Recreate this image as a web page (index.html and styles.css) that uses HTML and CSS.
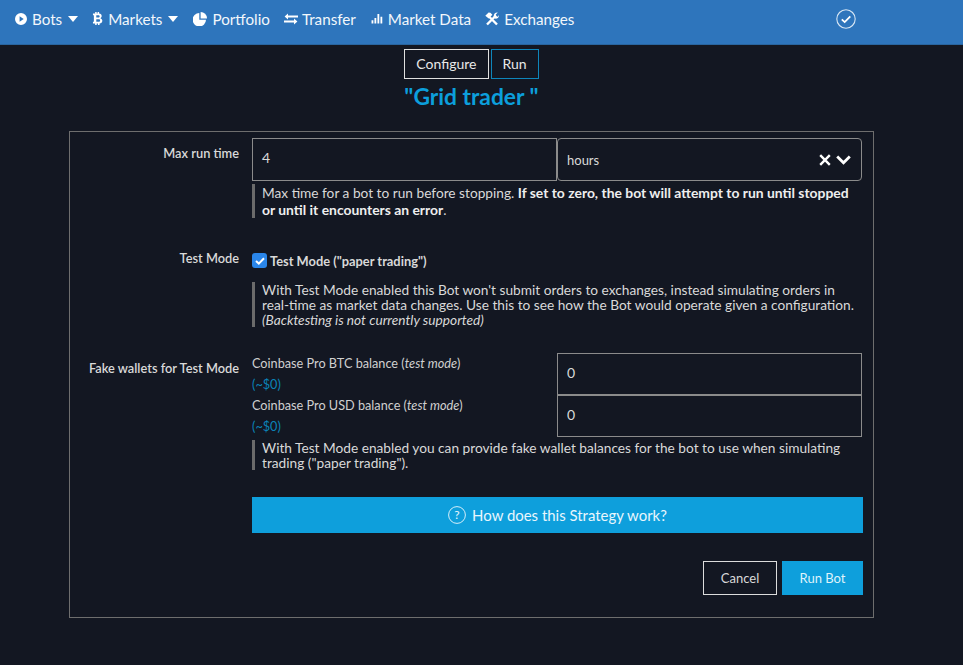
FILE: index.html
```html
<!DOCTYPE html>
<html lang="en">
<head>
<meta charset="utf-8">
<title>Run bot</title>
<link rel="stylesheet" href="styles.css">
</head>
<body>
<nav class="nav">
  <a class="nav-item nav-bots"><svg class="ico" viewBox="0 0 12 12"><path fill="#fff" fill-rule="evenodd" d="M6 0a6 6 0 1 1 0 12A6 6 0 0 1 6 0zM4.600 3.300v5.400L8.700 6z"/></svg>Bots<span class="caret"></span></a>
  <a class="nav-item nav-markets"><svg class="ico ico-btc" viewBox="0 0 11 14"><path fill="#fff" fill-rule="evenodd" d="M3 0h1.600v1.600h1V0h1.600v1.700C9 2 10 3 10 4.200c0 1-.5 1.900-1.400 2.400C9.800 7 10.700 8 10.700 9.400c0 1.700-1.200 2.900-3 3V14H6v-1.600H4.600V14H3v-1.600H.6V10.500h1V3.400h-1V1.600H3zM4.200 3.500v2.500h2.300c.8 0 1.300-.5 1.300-1.200s-.5-1.300-1.300-1.300zM4.200 7.900v2.600h2.700c.9 0 1.400-.5 1.400-1.300s-.5-1.300-1.400-1.300z"/></svg>Markets<span class="caret"></span></a>
  <a class="nav-item nav-portfolio"><svg class="ico ico-pie" viewBox="0 0 14 14"><path fill="#fff" d="M6.300 1V7.700h6.700A6.700 6.700 0 1 1 6.300 1z"/><path fill="#fff" d="M7.600 0A6.400 6.400 0 0 1 14 6.400H7.600z"/></svg>Portfolio</a>
  <a class="nav-item nav-transfer"><svg class="ico ico-tr" viewBox="0 0 14 12"><path fill="#fff" d="M4 .4v2h10v2H4v2L.6 3.400zM10 5.600l3.400 3-3.400 3v-2H0v-2h10z"/></svg>Transfer</a>
  <a class="nav-item nav-data"><svg class="ico ico-bar" viewBox="0 0 12 11"><path fill="#fff" d="M0 7h2v3.500H0zM3.200 4.500h2v6h-2zM6.500 0h2v10.500h-2zM9.800 3h2v7.500h-2z"/></svg>Market Data</a>
  <a class="nav-item nav-ex"><svg class="ico ico-tool" viewBox="0 0 14 14"><path fill="none" stroke="#fff" stroke-width="2.400" d="M4 4.500 12 12.500M11 3.500 2 12.500"/><path fill="#fff" d="M.3 3.800 3.600.5l1.800.2 2 2-3.700 3.700zM8.700 4.400C8.600 2 10.300.2 12.800.5L10.800 2.500l.5 1.700 1.700.5 1-1.700c.3 2.300-1.700 4-4 3.600z"/></svg>Exchanges</a>
  <svg class="status" viewBox="0 0 20 20"><circle cx="10" cy="10" r="9.200" fill="none" stroke="#d7e6f4" stroke-width="1.100"/><path fill="none" stroke="#fff" stroke-width="1.800" d="M5.800 10.300l2.900 2.800 5.600-5.700"/></svg>
</nav>

<main class="page">
  <div class="tabs">
    <button class="tab tab-active">Configure</button>
    <button class="tab tab-run">Run</button>
  </div>
  <h1 class="title">"Grid trader "</h1>

  <section class="panel">
    <div class="row row-time">
      <div class="label">Max run time</div>
      <div class="control">
        <div class="pair">
          <div class="field">4</div>
          <div class="field select"><span class="select-value">hours</span>
            <svg class="sel-x" viewBox="0 0 12 12"><path stroke="#fff" stroke-width="2.400" fill="none" d="M1.200 1.200l9.600 9.600M10.800 1.200l-9.600 9.600"/></svg>
            <svg class="sel-chev" viewBox="0 0 15 10"><path stroke="#fff" stroke-width="2.800" fill="none" d="M1.200 1.600 7.500 7.800l6.300-6.200"/></svg>
          </div>
        </div>
        <p class="note note-time">Max time for a bot to run before stopping. <strong>If set to zero, the bot will attempt to run until stopped or until it encounters an error</strong>.</p>
      </div>
    </div>

    <div class="row row-test">
      <div class="label label-test">Test Mode</div>
      <div class="control">
        <label class="check"><span class="box"><svg viewBox="0 0 10 8"><path stroke="#fff" stroke-width="2" fill="none" d="M1 4l2.800 2.600L9 1.200"/></svg></span>Test Mode ("paper trading")</label>
        <p class="note note-test">With Test Mode enabled this Bot won't submit orders to exchanges, instead simulating orders in real-time as market data changes. Use this to see how the Bot would operate given a configuration.<br><em>(Backtesting is not currently supported)</em></p>
      </div>
    </div>

    <div class="row row-wallet">
      <div class="label label-wallet">Fake wallets for Test Mode</div>
      <div class="control">
        <div class="pair wallet-pair">
          <div class="wallet-text">Coinbase Pro BTC balance (<em>test mode</em>)<span class="usd">(~$0)</span></div>
          <div class="field wallet-field">0</div>
        </div>
        <div class="pair wallet-pair">
          <div class="wallet-text">Coinbase Pro USD balance (<em>test mode</em>)<span class="usd">(~$0)</span></div>
          <div class="field wallet-field">0</div>
        </div>
        <p class="note note-wallet">With Test Mode enabled you can provide fake wallet balances for the bot to use when simulating trading ("paper trading").</p>
        <button class="how"><svg class="how-ico" viewBox="0 0 18 18"><circle cx="9" cy="9" r="8.400" fill="none" stroke="#d5eef9" stroke-width="1"/><text x="9" y="13" text-anchor="middle" class="how-q">?</text></svg>How does this Strategy work?</button>
        <div class="actions">
          <button class="btn btn-cancel">Cancel</button>
          <button class="btn btn-run">Run Bot</button>
        </div>
      </div>
    </div>
  </section>
</main>
</body>
</html>
```

FILE: styles.css
```css
* { box-sizing: border-box; }
html, body { margin: 0; padding: 0; }
body {
  height: 665px;
  overflow: hidden;
  background: #131722;
  color: #d9d9d9;
  font-family: Lato, "Open Sans", sans-serif;
  font-size: 14px;
}
.nav {
  height: 45px;
  background: #2e75bc;
  border-bottom: 1px solid #29659f;
  display: flex;
  align-items: center;
  padding: 0 0 7px 15px;
  color: #fff;
  font-size: 15.2px;
  position: relative;
}
.nav-item { display: flex; align-items: center; color: #f2f7fb; margin-right: 14px; }
.ico { width: 12px; height: 12px; margin-right: 5px; flex: none; }
.ico-btc { width: 11px; height: 13px; }
.ico-pie { width: 14px; height: 14px; }
.ico-tr { width: 14px; height: 12px; margin-right: 4px; }
.ico-bar { width: 12px; height: 10px; }
.ico-tool { width: 14px; height: 14px; }
.nav-markets { margin-right: 15px; }
.nav-transfer { margin-right: 15px; }
.caret {
  width: 0; height: 0;
  margin-left: 6px;
  border-left: 5px solid transparent;
  border-right: 5px solid transparent;
  border-top: 6px solid #fff;
}
.status { position: absolute; left: 836px; top: 9px; width: 20px; height: 20px; }

.page { display: flex; flex-direction: column; align-items: center; width: 943px; }
.tabs { display: flex; gap: 2px; margin-top: 4px; }
.tab {
  height: 30px;
  background: #131722;
  color: #e8e8e8;
  font: 14px Lato, sans-serif;
  border: 1px solid #e0e0e0;
  padding: 0 11px 2px;
}
.tab-run { border-color: #0e86bb; }
.title {
  margin: 2px 0 0;
  font-size: 22.8px;
  line-height: 30px;
  font-weight: 700;
  color: #0c9fdc;
  height: 30px;
}
.panel {
  width: 805px;
  height: 487px;
  margin-top: 20px;
  border: 1px solid #6e6e6e;
  padding: 6px 10px 0 0;
}
.row { display: grid; grid-template-columns: 169px 611px; column-gap: 13px; }
.row-test { margin-top: 29px; }
.row-wallet { margin-top: 26px; }
.label { text-align: right; font-size: 12.8px; font-weight: 600; color: #d9d9d9; padding-top: 7px; }
.label-test { padding-top: 0; margin-top: 3px; }
.pair { display: grid; grid-template-columns: 305px 305px; }
.field {
  height: 43px;
  border: 1px solid #8b8b8b;
  padding: 0 9px 4px;
  display: flex;
  align-items: center;
  font-size: 14px;
  color: #d9d9d9;
}
.select { border-radius: 4px; font-size: 13px; padding-bottom: 0; padding-right: 8px; }
.select-value { flex: 1; }
.sel-x { width: 12px; height: 12px; margin-right: 5px; }
.sel-chev { width: 15px; height: 10px; margin-right: 2px; }
.note {
  margin: 0;
  border-left: 3px solid #6b6b6b;
  padding-left: 7px;
  font-size: 13.7px;
  line-height: 15px;
  color: #d9d9d9;
}
.note strong { color: #eee; font-weight: 700; font-size: 13.9px; }
.note-time { margin-top: 3px; line-height: 17px; }
.check { display: flex; align-items: center; height: 17px; font-size: 12.85px; font-weight: 700; color: #d9d9d9; }
.box {
  width: 15px; height: 15px;
  margin-right: 3px;
  border-radius: 3px;
  background: #2a86ea;
  display: flex; align-items: center; justify-content: center;
}
.box svg { width: 10px; height: 8px; }
.row-test .control { padding-top: 5px; }
.note-test { margin-top: 13px; }
.wallet-pair { height: 42px; }
.wallet-text { font-size: 12.7px; line-height: 21px; color: #d0d0d0; }
.usd { display: block; color: #0b83b8; }
.wallet-field { height: 42px; }
.note-wallet { margin-top: 3px; }
.how {
  display: flex; align-items: center; justify-content: center;
  width: 611px;
  height: 36px;
  margin-top: 27px;
  border: 0;
  background: #0e9fdc;
  color: #e8f6fc;
  font: 14.95px Lato, sans-serif;
}
.how-ico { width: 18px; height: 18px; margin-right: 6px; }
.how-q { font: 12px Lato, sans-serif; fill: #e8f6fc; }
.actions { display: flex; justify-content: flex-end; gap: 5px; margin-top: 28px; }
.btn { height: 34px; font: 13px Lato, sans-serif; }
.btn-cancel { width: 74px; background: #131722; color: #d9d9d9; border: 1px solid #dcdcdc; }
.btn-run { width: 81px; background: #0e9fdc; color: #dff3fb; border: 0; }
```
